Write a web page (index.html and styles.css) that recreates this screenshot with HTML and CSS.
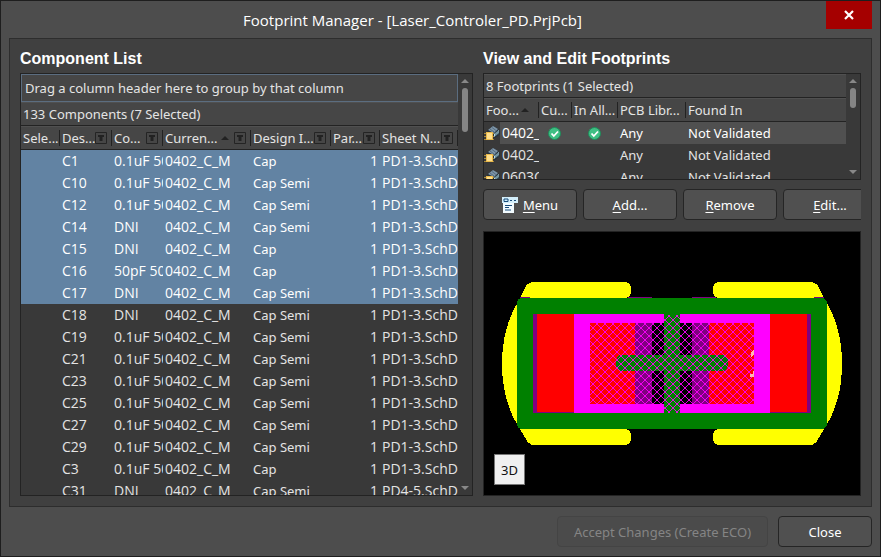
FILE: index.html
```
<!DOCTYPE html>
<html lang="en">
<head>
<meta charset="utf-8">
<title>Footprint Manager</title>
<link rel="stylesheet" href="styles.css">
<script src="app.js" defer></script>
</head>
<body>
<svg class="defs" aria-hidden="true">
  <symbol id="filter" viewBox="0 0 12 12"><path d="M.5 .5h11v11H.5z" fill="none" stroke="#242424"/><path d="M3 3h6v2H7.500v4h-3V5H3z" fill="#222"/></symbol>
  <symbol id="chip" viewBox="0 0 16 16">
    <path d="M3 6 9 1l6 4 1 4-5 4-4-2z" fill="#24303a"/><path d="M4 5 9 1l5 3-4 4z" fill="#7d95a9"/><path d="M6 4l4 3M8 2.500l4 3" stroke="#566b7c"/>
    <path d="M10 9l5-4v3l-5 4z" fill="#b9dce8"/><path d="M12 7v4M14 6v4" stroke="#35505c"/>
    <path d="M0 8.500h10M0 11.500h10M0 14.500h10" stroke="#a8883a"/><path d="M2 7h7v8H2z" fill="#e9b94c"/><path d="M3 8h5v6H3z" fill="#ffdf8c"/>
  </symbol>
  <symbol id="ok" viewBox="0 0 13 13"><circle cx="6.500" cy="6.500" r="6" fill="#3fbf84" stroke="#1f8c5a"/><path d="M3.500 6.500l2.300 2.500L10 4.500" fill="none" stroke="#fff" stroke-width="1.800"/></symbol>
</svg>
<div class="window">
  <header class="titlebar">
    <h1>Footprint Manager - [Laser_Controler_PD.PrjPcb]</h1>
    <button class="x" aria-label="Close window"><svg viewBox="0 0 10 10"><path d="M1 1l8 8M9 1L1 9" stroke="#fff" stroke-width="2.200"/></svg></button>
  </header>
  <main class="panel">
    <section class="list">
      <h2>Component List</h2>
      <div class="box">
        <div class="grid">
          <div class="group">Drag a column header here to group by that column</div>
          <div class="caption">133 Components (7 Selected)</div>
          <table class="components">
            <colgroup><col class="c1"><col class="c2"><col class="c3"><col class="c4"><col class="c5"><col class="c6"><col></colgroup>
            <thead><tr>
              <th><div class="h"><span>Sele...</span></div></th>
              <th><div class="h"><span>Des...</span><svg class="f"><use href="#filter"/></svg></div></th>
              <th><div class="h"><span>Co...</span><svg class="f"><use href="#filter"/></svg></div></th>
              <th><div class="h"><span>Curren...</span><i class="sort"></i><svg class="f"><use href="#filter"/></svg></div></th>
              <th><div class="h"><span>Design I...</span><svg class="f"><use href="#filter"/></svg></div></th>
              <th><div class="h"><span>Par...</span><svg class="f"><use href="#filter"/></svg></div></th>
              <th><div class="h"><span>Sheet N...</span><svg class="f"><use href="#filter"/></svg></div></th>
            </tr></thead>
            <tbody id="components"></tbody>
          </table>
        </div>
        <div class="scroll"><i class="up"></i><i class="thumb long"></i><i class="down"></i></div>
      </div>
    </section>
    <section class="edit">
      <h2>View and Edit Footprints</h2>
      <div class="box short">
        <div class="grid">
          <div class="caption">8 Footprints (1 Selected)</div>
          <table class="footprints">
            <colgroup><col class="f1"><col class="f2"><col class="f3"><col class="f4"><col></colgroup>
            <thead><tr>
              <th><div class="h"><span>Foo...</span><i class="sort"></i></div></th>
              <th><div class="h"><span>Cu...</span></div></th>
              <th><div class="h"><span>In All...</span></div></th>
              <th><div class="h"><span>PCB Libr...</span></div></th>
              <th><div class="h last"><span>Found In</span></div></th>
            </tr></thead>
            <tbody>
              <tr class="current"><td><div class="name"><svg><use href="#chip"/></svg>0402_C_M</div></td><td><svg class="ok"><use href="#ok"/></svg></td><td><svg class="ok wide"><use href="#ok"/></svg></td><td>Any</td><td>Not Validated</td></tr>
              <tr><td><div class="name"><svg><use href="#chip"/></svg>0402_C_N</div></td><td></td><td></td><td>Any</td><td>Not Validated</td></tr>
              <tr><td><div class="name"><svg><use href="#chip"/></svg>0603C</div></td><td></td><td></td><td>Any</td><td>Not Validated</td></tr>
            </tbody>
          </table>
        </div>
        <div class="scroll"><i class="up"></i><i class="thumb"></i><i class="down"></i></div>
      </div>
      <div class="actions">
        <button class="btn"><svg class="menu" viewBox="0 0 16 16"><path d="M0 0h16v6H0z" fill="#d4effb"/><path d="M1 6h11v10H1z" fill="#f2fbff"/><path d="M2 2h4v2.500H2zM8 3.500h2M12 3.500h2M3 8.500h7M3 10.500h4M3 13h6" fill="none" stroke="#174a78"/></svg><span><u>M</u>enu</span></button>
        <button class="btn"><span><u>A</u>dd...</span></button>
        <button class="btn"><span><u>R</u>emove</span></button>
        <button class="btn"><span><u>E</u>dit...</span></button>
      </div>
      <div class="preview">
        <svg class="board" viewBox="0 0 376 263" shape-rendering="crispEdges" role="img" aria-label="Footprint preview">
          <defs>
            <clipPath id="core"><path d="M106 91H180V83H196V91H270V172H196V181H180V172H106Z"/></clipPath>
            <g id="half">
              <path d="M50 50H140Q147 50 147 58T140 66H144V197H140Q147 197 147 205T140 213H50Q46 213 43 209L36 197Q18 170 18 132Q18 95 35 68L42 54Q45 50 50 50Z" fill="#ff0"/>
              <path d="M36 65h10v2H36zM144 65h24v2h-24z" fill="purple"/>
              <path d="M188 66H39Q33 66 33 72V191Q33 197 39 197H188Z" fill="green"/>
              <path d="M49 82h41v99H49z" fill="purple"/><path d="M53 82h37v98H53z" fill="red"/>
              <path d="M90 82h98v99H90z" fill="#f0f"/>
              <path d="M106 91h45v81h-45z" fill="red"/><path d="M151 91h17v81h-17z" fill="purple"/><path d="M168 91h20v81h-20z" fill="#000"/>
              <path d="M188 123H138Q132 123 132 131T138 139H188Z" fill="green"/>
            </g>
          </defs>
          <use href="#half"/><use href="#half" transform="translate(376 0) scale(-1 1)"/>
          <path d="M180 82h16v99h-16z" fill="green"/>
          <g clip-path="url(#core)"><path id="hatch" fill="none" stroke="#f0f" stroke-width=".9"/></g>
          <path d="M267 120l2-2h1v5l-3 2zM269 139h1v6h-4v-3h3z" fill="#ffb6b6"/>
        </svg>
        <button class="three">3D</button>
      </div>
    </section>
  </main>
  <footer><button class="btn eco" disabled>Accept Changes (Create ECO)</button><button class="btn close">Close</button></footer>
</div>
</body>
</html>
```
FILE: styles.css
```
* { box-sizing: border-box; }
body { margin: 0; font: 13px/22px "Noto Sans", sans-serif; color: #e4e4e4; background: #4d4d4d; }
.defs { position: absolute; width: 0; height: 0; }
.window { height: 100vh; display: flex; flex-direction: column; border: 1px solid #1e1e1e; background: #4d4d4d; padding: 0 8px 9px; overflow: hidden; }
.titlebar { height: 37px; flex: none; display: grid; grid-template-columns: 1fr 46px; }
h1 { margin: 0; padding-right: 10px; font: 400 15px/38px "Open Sans", sans-serif; text-align: center; color: #fff; white-space: nowrap; }
.x { height: 28px; border: 0; padding: 0; background: #a50000; display: grid; place-items: center; }
.x svg { width: 10px; height: 10px; }
.panel { flex: 1; min-height: 0; display: grid; grid-template-columns: 453fr 378fr; gap: 10px; padding: 10px; border: 1px solid #2d2d2d; background: #404040; }
section { min-width: 0; min-height: 0; display: flex; flex-direction: column; }
h2 { margin: 0 0 4px; font: bold 16px/20px "Liberation Sans", sans-serif; color: #fff; }
.box { flex: 1; min-height: 0; display: flex; border: 1px solid #232323; background: #393939; overflow: hidden; }
.box.short { flex: none; height: 107px; }
.grid { flex: 1; min-width: 0; }
.group { height: 28px; line-height: 26px; padding: 0 3px; border: 1px solid #5b6d80; background: #464646; white-space: nowrap; overflow: hidden; }
.caption { height: 24px; padding: 0 2px; border-bottom: 1px solid #232323; border-top: 1px solid #505050; background: #464646; }
table { width: 100%; table-layout: fixed; border-collapse: separate; border-spacing: 0; }
th { height: 24px; padding: 0; border-bottom: 1px solid #232323; border-top: 1px solid #505050; background: #464646; font-weight: 400; text-align: left; }
.h { height: 16px; line-height: 16px; display: flex; align-items: center; padding: 0 4px 0 2px; border-right: 1px solid #222; white-space: nowrap; }
.h.last { border-right: 0; }
.h span { flex: 1; min-width: 0; }
.f { width: 12px; height: 12px; flex: none; }
.sort { flex: none; border: 4px solid transparent; border-top: 0; border-bottom-color: #222; margin-right: 5px; }
td { height: 22px; padding: 0 0 0 2px; white-space: nowrap; overflow: hidden; }
.code, .name { font-family: "Open Sans", sans-serif; font-size: 14px; }
.num { text-align: right; padding-right: 2px; }
.c1 { width: 39px; } .c2 { width: 52px; } .c3 { width: 51px; } .c4 { width: 88px; } .c5 { width: 80px; } .c6 { width: 49px; }
.f1 { width: 55px; } .f2 { width: 33px; } .f3 { width: 46px; } .f4 { width: 68px; }
.selected td { background: #6283a3; color: #fff; }
.current td { background: #505050; color: #fff; }
.footprints td:first-child { padding: 0; }
.current td:first-child { background: linear-gradient(90deg, #393939 16px, #505050 16px); }
.name { display: flex; align-items: center; gap: 2px; }
.name svg { width: 16px; height: 16px; flex: none; }
.ok { display: block; width: 13px; height: 13px; margin-left: 7px; }
.ok.wide { margin-left: 14px; }
.scroll { width: 14px; flex: none; display: flex; flex-direction: column; align-items: center; padding: 5px 0 5px; background: #393939; }
.up { border: 4px solid transparent; border-top: 0; border-bottom-color: #888; }
.down { border: 4px solid transparent; border-bottom: 0; border-top-color: #888; margin-top: auto; }
.thumb { width: 6px; height: 20px; border-radius: 3px; background: #858585; margin-top: 5px; }
.thumb.long { height: 44px; }
.actions { display: grid; grid-template-columns: repeat(4, 94px); gap: 6px; margin: 9px 0 11px; overflow: hidden; }
.btn { height: 31px; display: flex; align-items: center; justify-content: center; gap: 5px; padding: 0; border: 1px solid #252525; border-radius: 4px; background: #505050; color: #fff; font: inherit; }
u { text-underline-offset: 2px; }
.menu { width: 16px; height: 16px; }
.preview { flex: 1; min-height: 0; position: relative; border: 1px solid #232323; background: #000; }
.board { display: block; width: 100%; height: 100%; }
.three { position: absolute; left: 10px; bottom: 10px; width: 31px; height: 31px; padding: 0; border: 1px solid #777; background: #f0f0f0; color: #111; font: inherit; }
footer { flex: none; display: flex; justify-content: flex-end; gap: 10px; padding-top: 9px; }
.eco { width: 211px; border-color: #444; background: #4b4b4b; color: #858585; }
.close { width: 94px; background: #505050; }
```
FILE: app.js
```
const rows = [
  ["C1", "0.1uF 50V", "Cap"], ["C10", "0.1uF 50V", "Cap Semi"], ["C12", "0.1uF 50V", "Cap Semi"],
  ["C14", "DNI", "Cap Semi"], ["C15", "DNI", "Cap"], ["C16", "50pF 50V", "Cap"], ["C17", "DNI", "Cap Semi"],
  ["C18", "DNI", "Cap Semi"], ["C19", "0.1uF 50V", "Cap Semi"], ["C21", "0.1uF 50V", "Cap Semi"],
  ["C23", "0.1uF 50V", "Cap Semi"], ["C25", "0.1uF 50V", "Cap Semi"], ["C27", "0.1uF 50V", "Cap Semi"],
  ["C29", "0.1uF 50V", "Cap Semi"], ["C3", "0.1uF 50V", "Cap"], ["C31", "DNI", "Cap Semi", "PD4-5.SchDoc"]
];
document.getElementById("components").innerHTML = rows.map(([id, value, item, sheet = "PD1-3.SchDoc"], i) =>
  `<tr class="${i < 7 ? "selected" : ""}"><td></td><td class="code">${id}</td><td class="code">${value}</td><td class="code">0402_C_M</td><td>${item}</td><td class="code num">1</td><td class="code">${sheet}</td></tr>`
).join("");

// Diagonal cross-hatching over the component body, one pair of lines every 8 units.
let lines = "";
for (let x = 0; x < 376; x += 8) lines += `M${x} 83l98 98M${x} 181l98 -98`;
document.getElementById("hatch").setAttribute("d", lines);
```
